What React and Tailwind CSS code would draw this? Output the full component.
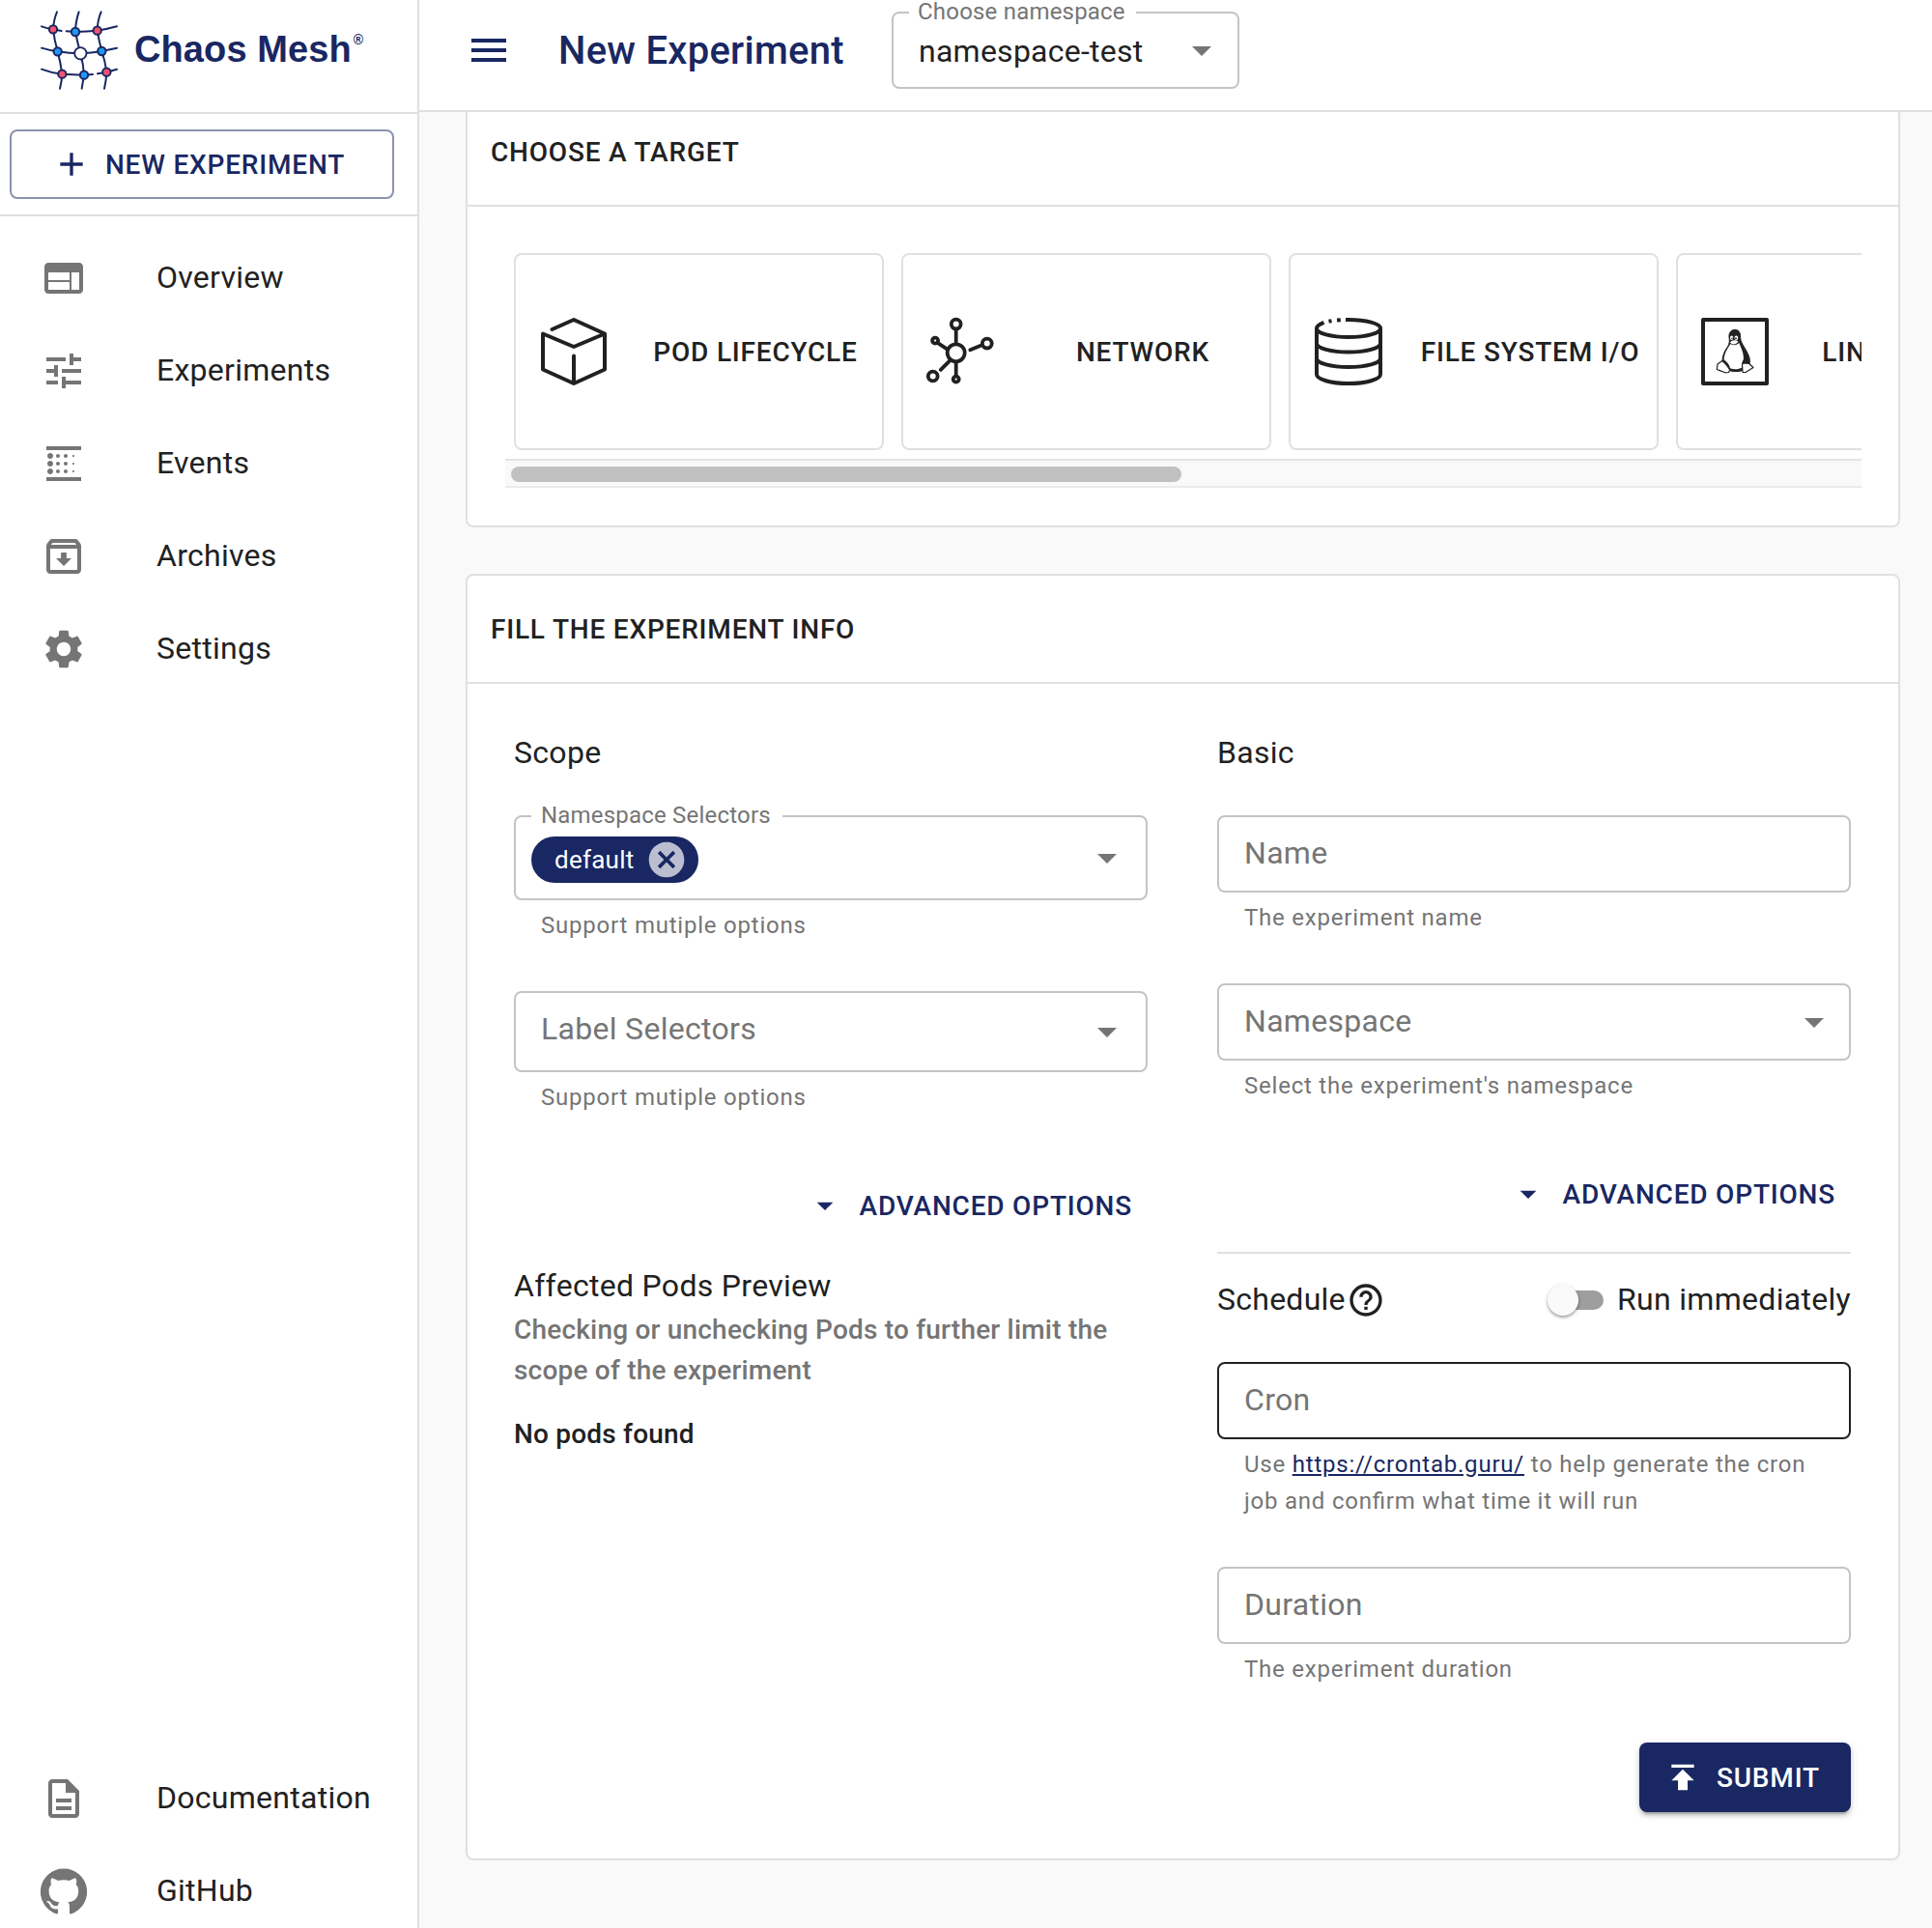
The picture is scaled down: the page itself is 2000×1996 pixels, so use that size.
import React from "react";
import { MdWeb, MdTune, MdBlurLinear, MdSettings, MdOutlineDescription, MdAdd, MdMenu, MdArrowDropDown, MdHelpOutline, MdPublish, MdCancel } from "react-icons/md";

const NAVY = "#192762";

function ArchiveIcon({ className }) {
  return (
    <svg viewBox="0 0 24 24" fill="currentColor" className={className}>
      <path d="M20.54 5.23l-1.39-1.68C18.88 3.21 18.47 3 18 3H6c-.47 0-.88.21-1.16.55L3.46 5.23C3.17 5.57 3 6.02 3 6.5V19c0 1.1.9 2 2 2h14c1.1 0 2-.9 2-2V6.5c0-.48-.17-.93-.46-1.27zM6.24 5h11.52l.83 1H5.42l.82-1zM5 19V8h14v11H5zm8.45-9h-2.9v3H8l4 4 4-4h-2.55z" />
    </svg>
  );
}

function GitHubIcon({ className }) {
  return (
    <svg viewBox="0 0 24 24" fill="currentColor" className={className}>
      <path d="M12 .3a12 12 0 0 0-3.8 23.4c.6.1.8-.3.8-.6v-2c-3.3.7-4-1.6-4-1.6-.6-1.4-1.4-1.8-1.4-1.8-1-.7.1-.7.1-.7 1.2 0 1.9 1.2 1.9 1.2 1 1.8 2.8 1.3 3.5 1 0-.8.4-1.3.7-1.6-2.7-.3-5.5-1.3-5.5-6 0-1.2.5-2.3 1.3-3.1-.2-.4-.6-1.6 0-3.2 0 0 1-.3 3.4 1.2a11.5 11.5 0 0 1 6 0c2.3-1.5 3.3-1.2 3.3-1.2.6 1.6.2 2.8 0 3.2.9.8 1.3 1.9 1.3 3.2 0 4.6-2.8 5.6-5.5 5.9.5.4.9 1 .9 2.2v3.3c0 .3.1.7.8.6A12 12 0 0 0 12 .3" />
    </svg>
  );
}

const meshNodes = [
  [75, 91, "#f2536f"], [144, 99, "#2196f3"], [212, 95, "#f2536f"],
  [89, 160, "#2196f3"], [226, 159, "#2196f3"],
  [103, 230, "#f2536f"], [171, 233, "#2196f3"], [241, 224, "#f2536f"],
];

function MeshLogo() {
  return (
    <svg viewBox="0 0 330 330" className="h-[110px] w-[110px] shrink-0" fill="none" stroke={NAVY} strokeWidth="6" strokeLinecap="round" strokeLinejoin="round">
      <path d="M39 82Q55 88 75 91L101 96M116 97L144 99Q180 98 212 95Q245 90 273 82" />
      <path d="M39 149Q62 156 89 160Q125 166 160 166Q195 164 226 159L273 149" />
      <path d="M39 215Q70 227 103 230L171 233L198 231M213 229L241 224L273 215" />
      <path d="M87 37Q77 60 75 91Q79 125 89 160Q98 195 103 230Q102 252 96 275" />
      <path d="M155 37Q145 65 144 99Q150 130 160 166Q169 200 171 233L164 275" />
      <path d="M224 37Q213 62 212 95Q217 125 226 159Q237 190 241 224Q240 250 234 275" />
      {meshNodes.map(([x, y, c]) => (
        <circle key={x + "-" + y} cx={x} cy={y} r="12.5" fill={c} />
      ))}
      <circle cx="160" cy="166" r="18.5" fill="#fff" strokeWidth="5.5" />
    </svg>
  );
}

function BoxIcon() {
  return (
    <svg viewBox="0 0 70 70" className="h-[70px] w-[70px]" fill="none" stroke="currentColor" strokeWidth="4" strokeLinecap="round" strokeLinejoin="round">
      <path d="M12.5 12L35 2L67 16.5V53.5L35 68L3 53.5V16.5L35 30L67 16.5M35 39.5V68" />
    </svg>
  );
}

function NetworkIcon() {
  return (
    <svg viewBox="0.7 0.7 70 70" className="h-[70px] w-[70px] overflow-visible" fill="none" stroke="currentColor" strokeWidth="3.8" strokeLinecap="round">
      <circle cx="30.4" cy="37" r="9" />
      <circle cx="30.4" cy="7.3" r="4.9" />
      <circle cx="62.5" cy="27.3" r="4.9" />
      <circle cx="8.8" cy="24.3" r="3" />
      <circle cx="6.4" cy="61.2" r="4.9" />
      <circle cx="30.4" cy="64.3" r="3" />
      <path d="M30.4 13.5V27M45 34L56 29.5M12 27L21 33M24 45L14.5 54.5M30.4 47.5V60" />
    </svg>
  );
}

function DiskIcon() {
  return (
    <svg viewBox="0 0 70 70" className="h-[70px] w-[70px]" fill="none" stroke="currentColor" strokeWidth="4">
      <path d="M32 2H35A33 9 0 0 1 68 11V58.5A33 9.5 0 0 1 2 58.5V11Q2 7.8 9.5 4.9" />
      <path d="M14.5 3.7L17.5 3.1M23 2.5L26.8 2.2" />
      <path d="M2 11A33 9 0 0 0 68 11M2 26.5A33 9 0 0 0 68 26.5M2 42A33 9 0 0 0 68 42" />
    </svg>
  );
}

function LinuxIcon() {
  return (
    <svg viewBox="1 0 70 70" className="h-[70px] w-[70px] overflow-visible" fill="none" stroke="currentColor" strokeLinejoin="round">
      <rect x="2" y="2" width="66" height="66" strokeWidth="4" />
      <path d="M29 20C28.5 15 31.5 12.3 35 12.3C39 12.3 40.8 15.5 40.6 20C40.6 25 44 29 47 34.5C50 40 51 44 50 47.5L47.5 50L43.5 54.5C38 56 33 56 29 54.5L24.5 48L22 43.5C22.5 38 24.5 34 27.5 30C29.5 26.5 29.6 24 29 20Z" fill="currentColor" />
      <path d="M30.5 27C27 32 23.5 38 23.7 43.5C27 45.5 29.5 49 30 52.3C34 54 39 53.5 42.3 51.5C42 48 42.3 44.5 43.8 43.5C44.5 37 41.5 31.5 39.3 26C36.5 28.5 33 29 30.5 27Z" fill="#fff" stroke="none" />
      <path d="M30 25.5C31.5 22.8 36.5 22.6 38.3 24.5C37.5 27 32.5 29 30 25.5Z" fill="#fff" stroke="none" />
      <ellipse cx="31.6" cy="20.8" rx="1.6" ry="2.2" fill="#fff" stroke="none" />
      <ellipse cx="36.4" cy="20.8" rx="1.9" ry="2.3" fill="#fff" stroke="none" />
      <circle cx="32" cy="21.2" r=".8" fill="currentColor" stroke="none" />
      <circle cx="36" cy="21.2" r=".9" fill="currentColor" stroke="none" />
      <path d="M17 48L21.8 44.5C24.5 46.5 27.5 50 29.8 54L28.5 56.5L25 56.8L16.3 53.5Z" fill="#fff" strokeWidth="1.2" />
      <path d="M42.5 48L44.5 47L49.5 47.3L54 51.5L46 56.5L43 56.3Z" fill="#fff" strokeWidth="1.2" />
    </svg>
  );
}

function NavItem({ icon: Icon, label }) {
  return (
    <div className="flex h-24 shrink-0 items-center pl-[42px]">
      <Icon className="h-12 w-12 text-[#757575]" />
      <span className="pb-[2px] pl-[72px] text-[32px] leading-[48px] tracking-[0.27px]">{label}</span>
    </div>
  );
}

function TargetCard({ icon: Icon, label }) {
  return (
    <div className="flex h-[204px] w-[383px] shrink-0 items-center rounded-lg border-2 border-[#e0e0e0] pl-[25px]">
      <Icon />
      <span className="flex-1 whitespace-nowrap pl-[22px] pt-[2px] text-center text-[28px] font-medium leading-[48px] tracking-[0.8px]">{label}</span>
    </div>
  );
}

function Helper({ children }) {
  return <p className="-mb-px mt-[7px] px-7 text-[24px] leading-[38px] tracking-[0.78px] text-[#757575] [font-feature-settings:'liga']">{children}</p>;
}

function FloatingLabel({ children, className }) {
  return (
    <span className={"absolute -top-[14px] whitespace-nowrap bg-white text-[24px] leading-6 tracking-[0.2px] text-[#757575] " + className}>
      {children}
    </span>
  );
}

function TextField({ label, select, dark }) {
  return (
    <div className={"flex h-20 items-center justify-between rounded-lg border-2 pl-[26px] pr-3 " + (dark ? "border-[#212121]" : "border-[#c4c4c4]")}>
      <span className="pb-[2px] text-[32px] leading-[38px] tracking-[0.3px] text-[#757575]">{label}</span>
      {select && <MdArrowDropDown className="h-12 w-12 text-[#757575]" />}
    </div>
  );
}

function AdvancedButton() {
  return (
    <button className="flex h-[73px] items-center gap-4 pr-4 text-[#192762]">
      <MdArrowDropDown className="h-10 w-10" />
      <span className="pt-[2px] text-[28px] font-medium leading-[49px] tracking-[0.8px]">ADVANCED OPTIONS</span>
    </button>
  );
}

function CardHeader({ children }) {
  return (
    <div className="flex h-28 items-center border-b-2 border-[#e0e0e0] pl-6 pt-[2px] text-[28px] font-medium leading-[44px] tracking-[0.8px]">
      {children}
    </div>
  );
}

export default function App() {
  return (
    <div className="flex h-[1996px] w-[2000px] overflow-hidden bg-[#f9f9f9] font-['Roboto',sans-serif] text-[#212121]">
      <aside className="flex h-[2006px] w-[434px] shrink-0 flex-col border-r-2 border-[#e0e0e0] bg-white">
        <div className="flex h-[118px] shrink-0 items-start border-b-2 border-[#e0e0e0] pl-[30px]">
          <MeshLogo />
          <span className="-ml-px mt-[29px] whitespace-nowrap font-['Liberation_Sans',sans-serif] text-[38px] font-bold leading-[44px] tracking-[0.1px] text-[#192762]">Chaos Mesh</span>
          <span className="ml-[2px] mt-[33px] font-['Liberation_Sans',sans-serif] text-[14px] font-bold leading-4 text-[#192762]">®</span>
        </div>
        <div className="flex h-[106px] shrink-0 items-center border-b-2 border-[#e0e0e0] pl-[10px]">
          <button className="flex h-[72px] w-[398px] items-center justify-center gap-[15px] rounded-lg border-2 border-[#8c93b0] pr-[7px] text-[#192762]">
            <MdAdd className="h-10 w-10" />
            <span className="text-[28px] font-medium leading-[49px] tracking-[0.8px]">NEW EXPERIMENT</span>
          </button>
        </div>
        <nav className="flex flex-col pt-4">
          <NavItem icon={MdWeb} label="Overview" />
          <NavItem icon={MdTune} label="Experiments" />
          <NavItem icon={MdBlurLinear} label="Events" />
          <NavItem icon={ArchiveIcon} label="Archives" />
          <NavItem icon={MdSettings} label="Settings" />
        </nav>
        <nav className="mt-auto flex flex-col">
          <NavItem icon={MdOutlineDescription} label="Documentation" />
          <NavItem icon={GitHubIcon} label="GitHub" />
        </nav>
      </aside>

      <div className="flex min-w-0 flex-1 flex-col">
        <header className="h-[116px] shrink-0 border-b-2 border-[#e0e0e0] bg-white">
          <div className="flex h-[104px] items-center pl-12">
            <MdMenu className="h-12 w-12 text-[#192762]" />
            <h1 className="ml-12 w-[345px] whitespace-nowrap pt-[2px] text-[40px] font-medium leading-[64px] tracking-[0.25px] text-[#192762]">New Experiment</h1>
            <div className="relative flex h-20 w-[360px] items-center justify-between rounded-lg border-2 border-[#c4c4c4] pl-[26px] pr-[13px]">
              <FloatingLabel className="left-4 pl-[9px] pr-[11px]">Choose namespace</FloatingLabel>
              <span className="pt-[2px] text-[32px] leading-[38px] tracking-[0.25px]">namespace-test</span>
              <MdArrowDropDown className="h-12 w-12 text-[#757575]" />
            </div>
          </div>
        </header>

        <main className="flex min-h-0 flex-1 flex-col overflow-hidden pl-12">
          <section className="-mt-4 h-[446px] w-[1485px] shrink-0 rounded-lg border-2 border-[#e0e0e0] bg-white">
            <CardHeader>CHOOSE A TARGET</CardHeader>
            <div className="ml-[39px] mt-12 w-[1404px] overflow-hidden">
              <div className="flex gap-[18px] pl-[9px]">
                <TargetCard icon={BoxIcon} label="POD LIFECYCLE" />
                <TargetCard icon={NetworkIcon} label="NETWORK" />
                <TargetCard icon={DiskIcon} label="FILE SYSTEM I/O" />
                <TargetCard icon={LinuxIcon} label="LINUX KERNEL" />
              </div>
              <div className="mt-[9px] h-[30px] border-y-2 border-t-[#e3e3e3] border-b-[#ebebeb] bg-[#f9f9f9] pl-[6px] pt-[6px]">
                <div className="h-4 w-[694px] rounded-full bg-[#c1c1c1]" />
              </div>
            </div>
          </section>

          <section className="mt-12 h-[1332px] w-[1485px] shrink-0 rounded-lg border-2 border-[#e0e0e0] bg-white">
            <CardHeader>FILL THE EXPERIMENT INFO</CardHeader>
            <div className="flex gap-[72px] px-12 pt-12">
              <div className="flex w-[656px] shrink-0 flex-col">
                <h2 className="pt-[2px] text-[32px] leading-[42px] tracking-[0.3px]">Scope</h2>
                <div className="relative mt-11 flex h-[88px] items-center justify-between rounded-lg border-2 border-[#c4c4c4] pl-4 pr-4">
                  <FloatingLabel className="left-4 pl-[10px] pr-[12px]">Namespace Selectors</FloatingLabel>
                  <span className="mt-1 flex h-12 w-[173px] items-center rounded-full bg-[#192762] pl-6">
                    <span className="text-[26px] leading-8 tracking-[0.24px] text-white">default</span>
                    <MdCancel className="ml-3 h-11 w-11 shrink-0 text-white/70" />
                  </span>
                  <MdArrowDropDown className="h-12 w-12 text-[#757575]" />
                </div>
                <Helper>Support mutiple options</Helper>
                <div className="mt-[50px] flex h-[84px] items-center justify-between rounded-lg border-2 border-[#c4c4c4] pl-[26px] pr-4">
                  <span className="pb-[6px] text-[32px] leading-[38px] tracking-[0.3px] text-[#757575]">Label Selectors</span>
                  <MdArrowDropDown className="h-12 w-12 text-[#757575]" />
                </div>
                <Helper>Support mutiple options</Helper>
                <div className="mt-[57px] flex justify-end">
                  <AdvancedButton />
                </div>
                <h2 className="mt-[25px] text-[32px] leading-[44px] tracking-[0.3px]">Affected Pods Preview</h2>
                <p className="mt-[3px] text-[28px] font-medium leading-[42px] tracking-[0.2px] text-[#757575]">
                  Checking or unchecking Pods to further limit the
                  <br />
                  scope of the experiment
                </p>
                <p className="mt-6 text-[28px] font-medium leading-[42px] tracking-[0.2px]">No pods found</p>
              </div>

              <div className="flex w-[656px] shrink-0 flex-col">
                <h2 className="pt-[2px] text-[32px] leading-[42px] tracking-[0.3px]">Basic</h2>
                <div className="mt-11">
                  <TextField label="Name" />
                  <Helper>The experiment name</Helper>
                </div>
                <div className="mt-[50px]">
                  <TextField label="Namespace" select />
                  <Helper>Select the experiment's namespace</Helper>
                </div>
                <div className="mt-[57px] flex justify-end">
                  <AdvancedButton />
                </div>
                <div className="mt-[24px] h-[2px] bg-[#e0e0e0]" />
                <div className="mt-6 flex h-12 items-center justify-between text-[32px] leading-[48px] tracking-[0.3px]">
                  <span className="flex items-center">
                    <span className="w-[134px] whitespace-nowrap pb-[2px] tracking-[0.25px]">Schedule</span>
                    <MdHelpOutline className="h-10 w-10" />
                  </span>
                  <span className="flex items-center">
                    <span className="relative mr-[14px] h-5 w-[52px] rounded-full bg-[#9e9e9e]">
                      <span className="absolute -left-[6px] -top-[6px] h-8 w-8 rounded-full bg-[#fafafa] shadow-[0_2px_3px_rgba(0,0,0,0.3),0_1px_5px_rgba(0,0,0,0.12)]" />
                    </span>
                    <span className="pb-[2px]">Run immediately</span>
                  </span>
                </div>
                <div className="mt-10">
                  <TextField label="Cron" dark />
                  <Helper>
                    Use <a className="text-[#192762] underline">https://crontab.guru/</a> to help generate the cron
                    <br />
                    job and confirm what time it will run
                  </Helper>
                </div>
                <div className="mt-[50px]">
                  <TextField label="Duration" />
                  <Helper>The experiment duration</Helper>
                </div>
                <button className="mt-[58px] flex h-[72px] w-[219px] items-center gap-[15px] self-end rounded-lg bg-[#192762] pl-[25px] text-white shadow-[0_6px_2px_-4px_rgba(0,0,0,0.2),0_4px_4px_rgba(0,0,0,0.14),0_2px_10px_rgba(0,0,0,0.12)]">
                  <MdPublish className="h-10 w-10" />
                  <span className="text-[28px] font-medium leading-[49px] tracking-[0.8px]">SUBMIT</span>
                </button>
              </div>
            </div>
          </section>
        </main>
      </div>
    </div>
  );
}
